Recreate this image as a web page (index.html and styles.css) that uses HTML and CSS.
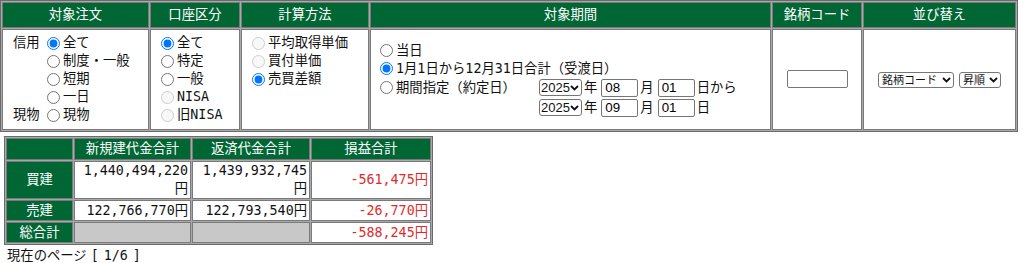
FILE: index.html
```html
<!DOCTYPE html>
<html lang="ja">
<head>
<meta charset="utf-8">
<title>損益一覧</title>
<link rel="stylesheet" href="styles.css">
</head>
<body>
<form class="search-form">
<table class="frame search">
  <colgroup>
    <col class="w-order"><col class="w-account"><col class="w-calc"><col class="w-period"><col class="w-code"><col class="w-sort">
  </colgroup>
  <tr class="head">
    <th>対象注文</th><th>口座区分</th><th>計算方法</th><th>対象期間</th><th>銘柄コード</th><th>並び替え</th>
  </tr>
  <tr class="body">
    <td class="cell-order">
      <div class="order-grid">
        <span class="lbl">信用</span>
        <div class="opts">
          <label class="opt"><input type="radio" name="order" checked>全て</label>
          <label class="opt"><input type="radio" name="order">制度・一般</label>
          <label class="opt"><input type="radio" name="order">短期</label>
          <label class="opt"><input type="radio" name="order">一日</label>
        </div>
        <span class="lbl">現物</span>
        <div class="opts">
          <label class="opt"><input type="radio" name="order">現物</label>
        </div>
      </div>
    </td>
    <td class="cell-account">
      <div class="opts">
        <label class="opt"><input type="radio" name="acc" checked>全て</label>
        <label class="opt"><input type="radio" name="acc">特定</label>
        <label class="opt"><input type="radio" name="acc">一般</label>
        <label class="opt"><input type="radio" name="acc" disabled>NISA</label>
        <label class="opt"><input type="radio" name="acc" disabled>旧NISA</label>
      </div>
    </td>
    <td class="cell-calc">
      <div class="opts">
        <label class="opt"><input type="radio" name="calc" disabled>平均取得単価</label>
        <label class="opt"><input type="radio" name="calc" disabled>買付単価</label>
        <label class="opt"><input type="radio" name="calc" checked>売買差額</label>
      </div>
    </td>
    <td class="cell-period">
      <div class="opts">
        <label class="opt"><input type="radio" name="period">当日</label>
        <label class="opt"><input type="radio" name="period" checked>1月1日から12月31日合計（受渡日）</label>
        <div class="range">
          <label class="opt range-label"><input type="radio" name="period">期間指定（約定日）</label>
          <div class="dates">
            <div class="date-row">
              <select class="year"><option>2025</option></select><span class="unit">年</span>
              <input class="num" type="text" value="08"><span class="unit">月</span>
              <input class="num" type="text" value="01"><span class="unit">日から</span>
            </div>
            <div class="date-row">
              <select class="year"><option>2025</option></select><span class="unit">年</span>
              <input class="num" type="text" value="09"><span class="unit">月</span>
              <input class="num" type="text" value="01"><span class="unit">日</span>
            </div>
          </div>
        </div>
      </div>
    </td>
    <td class="cell-code"><input class="code" type="text"></td>
    <td class="cell-sort">
      <div class="sorts">
        <select class="small s-code"><option>銘柄コード</option></select>
        <select class="small s-order"><option>昇順</option></select>
      </div>
    </td>
  </tr>
</table>
</form>

<table class="frame summary">
  <colgroup>
    <col class="s1"><col class="s2"><col class="s3"><col class="s4">
  </colgroup>
  <tr class="shead">
    <th></th><th>新規建代金合計</th><th>返済代金合計</th><th>損益合計</th>
  </tr>
  <tr class="r-buy">
    <th>買建</th>
    <td class="num-cell">1,440,494,220円</td>
    <td class="num-cell">1,439,932,745円</td>
    <td class="num-cell neg">-561,475円</td>
  </tr>
  <tr class="r-sell">
    <th>売建</th>
    <td class="num-cell">122,766,770円</td>
    <td class="num-cell">122,793,540円</td>
    <td class="num-cell neg">-26,770円</td>
  </tr>
  <tr class="r-total">
    <th>総合計</th>
    <td class="blank"></td>
    <td class="blank"></td>
    <td class="num-cell neg">-588,245円</td>
  </tr>
</table>
<p class="pager">現在のページ<span class="pg">[ 1/6 ]</span></p>
</body>
</html>
```
FILE: styles.css
```css
* { box-sizing: border-box; }
html, body { margin: 0; padding: 0; background: #fff; }
body {
  font-family: "DejaVu Sans Mono", "Noto Sans CJK JP", monospace;
  font-size: 13.33px;
  line-height: 18px;
  color: #111;
}
.search-form { margin: 0; }

.frame {
  border-collapse: separate;
  border-spacing: 1px;
  border: 1px solid #6a6a6a;
  background: #a9a9a9;
}
.frame th, .frame td {
  border: 1px solid #7a7a7a;
  padding: 0;
}
.frame th {
  background: #006633;
  color: #fff;
  font-weight: normal;
  text-align: center;
}
.frame td { background: #fff; }

/* top search table */
.search { width: 1018px; table-layout: fixed; }
.w-order { width: 147px; }
.w-account { width: 90px; }
.w-calc { width: 128px; }
.w-period { width: 401px; }
.w-code { width: 90px; }
.w-sort { width: 153px; }
.search .head th { height: 26px; }
.search .body td { height: 101px; vertical-align: top; }

.opts { display: flex; flex-direction: column; }
.opt {
  display: flex;
  align-items: center;
  height: 18px;
  white-space: nowrap;
}
.opt input {
  width: 13px;
  height: 13px;
  margin: 0 3px 0 5px;
  flex: none;
}

.search .body td.cell-order { padding: 4px 4px 0 10px; }
.order-grid {
  display: grid;
  grid-template-columns: 29px auto;
}
.lbl { line-height: 18px; }
.search .body td.cell-account { padding: 4px 4px 0 5px; }
.search .body td.cell-calc { padding: 4px 4px 0 5px; }
.search .body td.cell-period { padding: 0 4px; vertical-align: middle; }
.range { display: flex; align-items: flex-start; }
.range-label { margin-top: 1px; width: 164px; }
.dates { display: flex; flex-direction: column; }
.date-row {
  display: flex;
  align-items: center;
  height: 20px;
}
.unit { margin-left: 2px; margin-right: 4px; }

select {
  appearance: none;
  -webkit-appearance: none;
  background: #fff url("data:image/svg+xml,%3Csvg xmlns='http://www.w3.org/2000/svg' width='9' height='6' viewBox='0 0 9 6'%3E%3Cpath d='M1 1l3.5 3.5L8 1' fill='none' stroke='%23111' stroke-width='1.8'/%3E%3C/svg%3E") no-repeat right 2px center;
  border: 1px solid #767676;
  border-radius: 3px;
  color: #111;
  margin: 0;
}
.year {
  width: 43px;
  height: 17px;
  font: 13px "Liberation Sans", Arial, sans-serif;
  padding: 0 9px 0 1px;
}
.num {
  width: 37px;
  height: 18px;
  font: 13.33px "Liberation Sans", Arial, sans-serif;
  padding: 1px 3px;
  margin: 0;
  border: 1px solid #767676;
  border-radius: 2px;
}

.search .body td.cell-code { vertical-align: middle; text-align: center; }
.code {
  width: 61px;
  height: 18px;
  margin: 0;
  padding: 1px 3px;
  font: 13.33px "Liberation Sans", Arial, sans-serif;
  border: 1px solid #767676;
  border-radius: 2px;
}
.search .body td.cell-sort { vertical-align: middle; }
.sorts { display: flex; justify-content: center; gap: 5px; }
.small {
  height: 16px;
  font: 11px "Liberation Sans", "Noto Sans CJK JP", sans-serif;
  padding: 0 13px 0 3px;
}
.s-code { width: 76px; }
.s-order { width: 42px; }

/* summary table */
.summary { margin: 4px 0 0 4px; table-layout: fixed; width: 429px; }
.s1 { width: 67px; }
.s2 { width: 117px; }
.s3 { width: 118px; }
.s4 { width: 120px; }
.shead th { height: 22px; }
.r-buy th, .r-buy td { height: 38px; }
.r-sell th, .r-sell td { height: 21px; }
.r-total th, .r-total td { height: 21px; }
.frame td.num-cell { text-align: right; padding: 0 2px; vertical-align: middle; }
.neg { color: #dd2b2b; }
.frame td.blank { background: #c8c8c8; }

.pager { margin: 2px 0 0 7px; }
.pg { margin-left: 4px; word-spacing: -3px; }
```
